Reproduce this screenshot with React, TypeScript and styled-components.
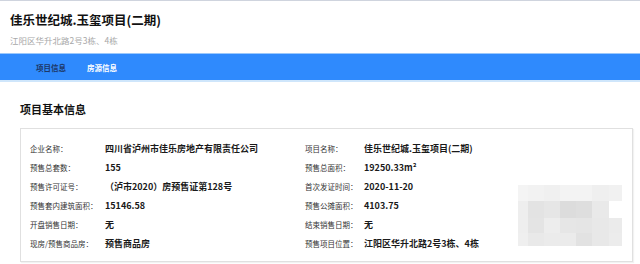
import React from 'react';
import styled, { createGlobalStyle } from 'styled-components';

const GlobalStyle = createGlobalStyle`
    body {
        margin: 0;
        background: #ffffff;
        font-family: "Noto Sans CJK SC", "Noto Sans", sans-serif;
        color: #222;
    }
`;

const Page = styled.div`
    width: 640px;
    height: 264px;
    overflow: hidden;
    border-top: 1px solid #cfd4de;
    box-sizing: border-box;
`;

const Header = styled.header`
    height: 52px;
    padding: 9px 10px 0;
    box-sizing: border-box;
`;

const Title = styled.h1`
    margin: 0;
    font-size: 12.5px;
    line-height: 20px;
    font-weight: 700;
    color: #111;
`;

const Address = styled.div`
    font-size: 8.5px;
    line-height: 20px;
    color: #a8a8a8;
`;

const NavBar = styled.nav`
    height: 26px;
    display: flex;
    align-items: center;
    gap: 21px;
    padding-left: 36px;
    background: #2f8afd;
    border-top: 1px solid #9cc8fb;
    border-bottom: 2px solid #cfe6fb;
`;

const NavItem = styled.span<{ active?: boolean }>`
    font-size: 7.5px;
    font-weight: 700;
    color: ${props => props.active ? '#1d3766' : '#ffffff'};
`;

const Section = styled.section`
    padding: 19px 7px 0 20px;
`;

const Heading = styled.h2`
    margin: 0;
    font-size: 11px;
    line-height: 16px;
    font-weight: 700;
    color: #111;
`;

const Card = styled.div`
    position: relative;
    margin-top: 11px;
    padding: 10px 9px 8px;
    border: 1px solid #e0e0e0;
    box-shadow: 1px 1px 1px rgba(0, 0, 0, 0.05);
`;

const InfoGrid = styled.div`
    display: grid;
    grid-template-columns: 75px 200px 59px 1fr;
    grid-auto-rows: 19px;
    align-items: center;
`;

const Label = styled.span`
    font-size: 7.5px;
    color: #333;
    white-space: nowrap;
`;

const Value = styled.span`
    font-size: 9px;
    font-weight: 700;
    color: #1a1a1a;
    white-space: nowrap;
`;

const Mosaic = styled.div`
    position: absolute;
    left: 497px;
    top: 56px;
    display: grid;
    grid-template-columns: 10px 16px 16px 16px 16px 17px 13px;
    grid-template-rows: 16px 17px 15px 13px;
`;

const Cell = styled.div<{ shade: string }>`
    background: ${props => props.shade};
`;

const rows: [string, string, string, string][] = [
    ['企业名称：', '四川省泸州市佳乐房地产有限责任公司', '项目名称：', '佳乐世纪城.玉玺项目(二期)'],
    ['预售总套数：', '155', '预售总面积：', '19250.33m²'],
    ['预售许可证号：', '（泸市2020）房预售证第128号', '首次发证时间：', '2020-11-20'],
    ['预售套内建筑面积：', '15146.58', '预售公摊面积：', '4103.75'],
    ['开盘销售日期：', '无', '结束销售日期：', '无'],
    ['现房/预售商品房：', '预售商品房', '预售项目位置：', '江阳区华升北路2号3栋、4栋'],
];

const shades = [
    '#f4f4f4', '#f2f2f2', '#f0f0f0', '#f3f3f3', '#f3f3f3', '#efefef', '#f1f1f1',
    '#eeeeee', '#e3e3e3', '#e6e6e6', '#dcdcdc', '#dedede', '#e9e9e9', '#ffffff',
    '#eeeeee', '#e4e4e4', '#ededed', '#e6e6e6', '#e5e5e5', '#e8e8e8', '#ebebeb',
    '#efefef', '#e9e9e9', '#ebebeb', '#ebebeb', '#e2e2e2', '#e8e8e8', '#ececec',
];

const App: React.FC = () => {
    return (
        <Page>
            <GlobalStyle />
            <Header>
                <Title>佳乐世纪城.玉玺项目(二期)</Title>
                <Address>江阳区华升北路2号3栋、4栋</Address>
            </Header>
            <NavBar>
                <NavItem active>项目信息</NavItem>
                <NavItem>房源信息</NavItem>
            </NavBar>
            <Section>
                <Heading>项目基本信息</Heading>
                <Card>
                    <InfoGrid>
                        {rows.map(r => (
                            <React.Fragment key={r[0]}>
                                <Label>{r[0]}</Label>
                                <Value>{r[1]}</Value>
                                <Label>{r[2]}</Label>
                                <Value>{r[3]}</Value>
                            </React.Fragment>
                        ))}
                    </InfoGrid>
                    <Mosaic>
                        {shades.map((s, i) => <Cell key={i} shade={s} />)}
                    </Mosaic>
                </Card>
            </Section>
        </Page>
    );
};

export default App;
